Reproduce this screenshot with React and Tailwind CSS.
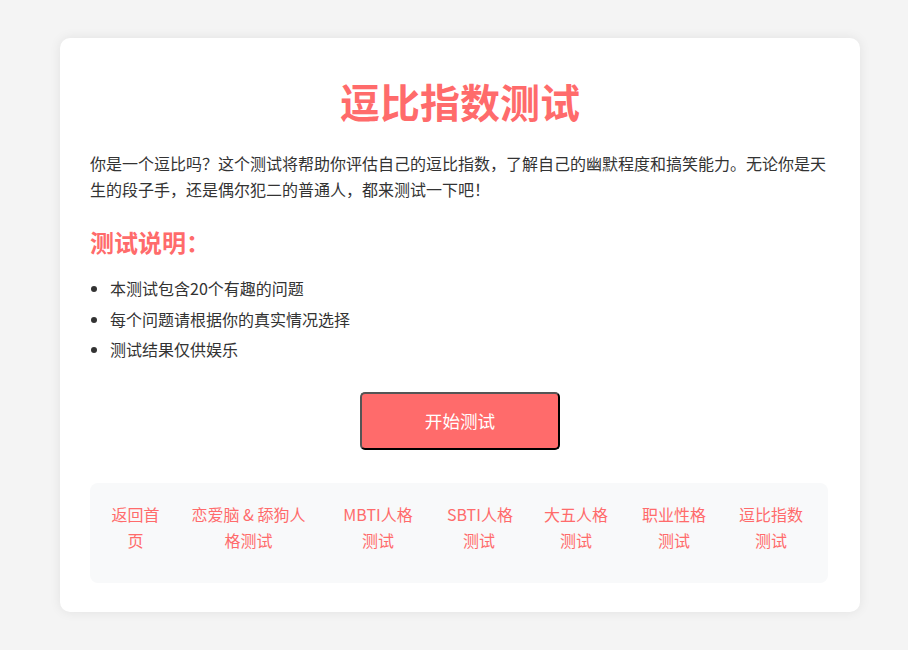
import React from 'react';

const font = { fontFamily: '"Noto Sans CJK SC", "Noto Sans", sans-serif' };

const navLinks = [
  { lines: ['返回首', '页'], w: 'w-[49px]', ml: 'ml-0' },
  { lines: ['恋爱脑 & 舔狗人', '格测试'], w: 'w-[121px]', ml: 'ml-[28px]' },
  { lines: ['MBTI人格', '测试'], w: 'w-[72px]', ml: 'ml-[33px]' },
  { lines: ['SBTI人格', '测试'], w: 'w-[64px]', ml: 'ml-[33px]' },
  { lines: ['大五人格', '测试'], w: 'w-[64px]', ml: 'ml-[33px]' },
  { lines: ['职业性格', '测试'], w: 'w-[64px]', ml: 'ml-[34px]' },
  { lines: ['逗比指数', '测试'], w: 'w-[64px]', ml: 'ml-[33px]' },
];

export default function App() {
  return (
    <div className="min-h-[650px] w-full bg-[#f4f4f4] pt-[38px] pl-[60px]" style={font}>
      <div className="w-[800px] bg-white rounded-[10px] shadow-[0_0_12px_rgba(0,0,0,0.08)] px-[30px] pt-[30px] pb-[29px] text-[#333]">
        {/* title */}
        <h1 className="mt-[9px] text-center text-[40px] leading-[48px] font-bold text-[#ff6b6b]">
          逗比指数测试
        </h1>

        <p className="mt-[26px] text-[16px] leading-[25.6px]">
          你是一个逗比吗？这个测试将帮助你评估自己的逗比指数，了解自己的幽默程度和搞笑能力。无论你是天生的段子手，还是偶尔犯二的普通人，都来测试一下吧！
        </p>

        <h2 className="mt-[23px] text-[24px] leading-[33px] font-bold text-[#ff6b6b]">测试说明：</h2>

        <ul className="mt-[18px] list-disc pl-[20px] text-[16px] leading-[25.6px]">
          <li className="mb-[5px]">本测试包含20个有趣的问题</li>
          <li className="mb-[5px]">每个问题请根据你的真实情况选择</li>
          <li>测试结果仅供娱乐</li>
        </ul>

        <div className="mt-[29px] flex justify-center">
          <button className="w-[200px] h-[58px] bg-[#ff6b6b] text-white text-[17.6px] rounded-[5px] border-2 border-t-[#555] border-l-[#555] border-r-black border-b-black">
            开始测试
          </button>
        </div>

        {/* footer nav */}
        <div className="mt-[33px] w-[738px] bg-[#f8f9fa] rounded-[8px] pl-[21px] pt-[19px] pb-[30px] flex items-start">
          {navLinks.map((l, i) => (
            <a key={i} href="#" className={`${l.w} ${l.ml} shrink-0 text-center text-[16px] leading-[25.6px] text-[#ff6b6b] whitespace-nowrap`}>
              {l.lines[0]}
              <br />
              {l.lines[1]}
            </a>
          ))}
        </div>
      </div>
    </div>
  );
}
